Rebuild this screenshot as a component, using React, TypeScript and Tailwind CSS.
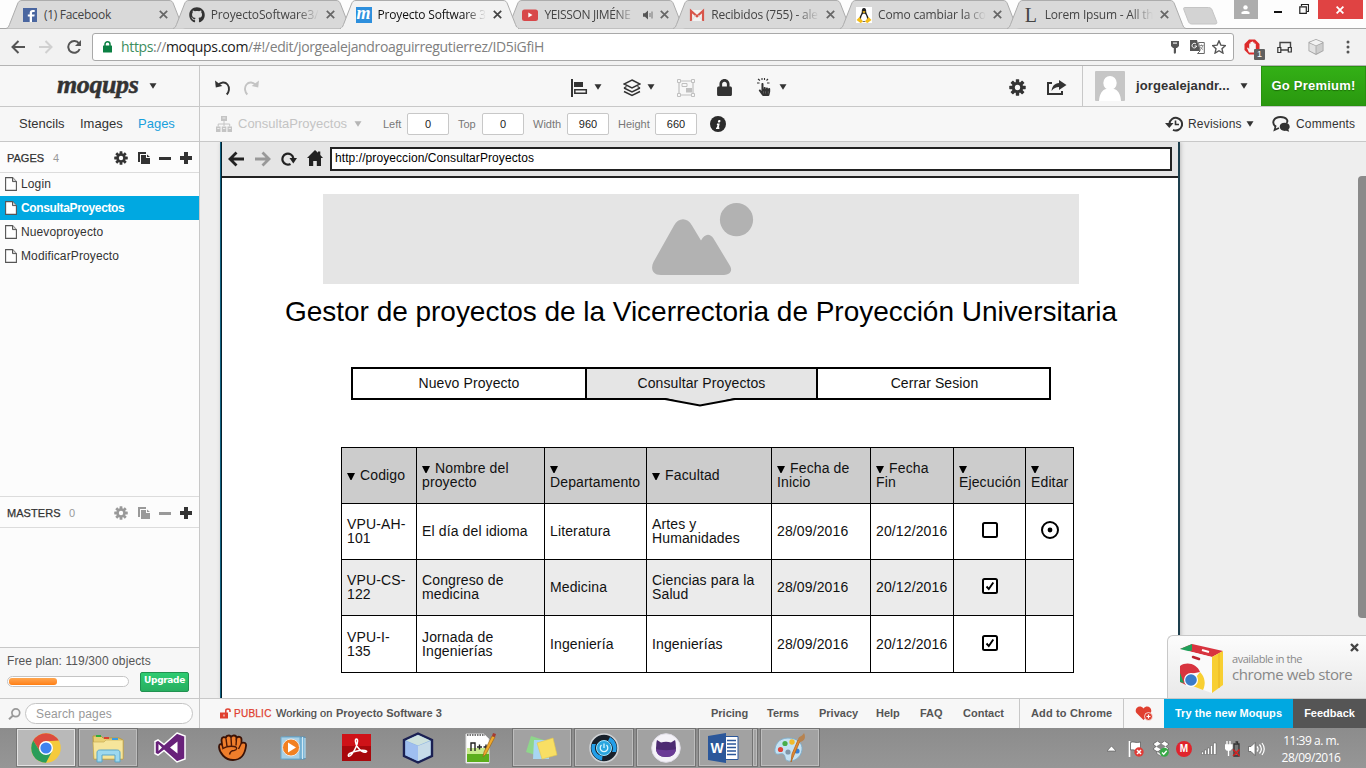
import React from "react";
import { FaGithub, FaLock, FaHandPointer, FaInfo } from "react-icons/fa";

const ui = "font-['Liberation_Sans',Arial,sans-serif]";
const segoe = "font-['Open_Sans','Noto_Sans',sans-serif]";

function Caret({ className = "" }: { className?: string }) {
  return (
    <svg className={"shrink-0 " + className} width="8" height="6" viewBox="0 0 8 6">
      <path d="M0.5 0.3h7L4 5.8z" fill="currentColor" />
    </svg>
  );
}

function Gear({ size, hole, className = "" }: { size: number; hole: string; className?: string }) {
  return (
    <svg className={"shrink-0 " + className} width={size} height={size} viewBox="-9 -9 18 18">
      {[0, 45, 90, 135].map((a) => (
        <rect key={a} x="-1.8" y="-8.7" width="3.6" height="17.4" rx="0.5" fill="currentColor" transform={`rotate(${a})`} />
      ))}
      <circle r="6" fill="currentColor" />
      <circle r="2.8" fill={hole} />
    </svg>
  );
}

/* ---------- Browser tab strip ---------- */

function TabIcon({ kind }: { kind: string }) {
  if (kind === "facebook")
    return (
      <svg width="16" height="16" viewBox="0 0 16 16">
        <rect x="1" y="1" width="14" height="14" fill="#4a66a0" />
        <path d="M10 15V9.600h2.300l.4-2.200H10V6.200c0-.8.4-1.200 1.200-1.200h1.500V3h-2C8.600 3 7.700 4.200 7.700 6v1.400H5.800v2.200h1.900V15z" fill="#fff" />
      </svg>
    );
  if (kind === "github") return <FaGithub size={16} color="#333" />;
  if (kind === "moqups")
    return (
      <span className="flex h-4 w-4 items-center justify-center bg-[#2d8fdd] pb-1 font-['Liberation_Serif',serif] text-[18px] leading-[16px] font-bold text-white italic">m</span>
    );
  if (kind === "youtube")
    return (
      <svg width="16" height="16" viewBox="0 0 16 16">
        <rect x="0" y="2.500" width="16" height="11.500" rx="2.500" fill="#d8484a" />
        <path d="M6.300 5.500v5l4.200-2.500z" fill="#fff" />
      </svg>
    );
  if (kind === "gmail")
    return (
      <svg width="16" height="16" viewBox="0 0 16 16">
        <rect x="1" y="3" width="14" height="11" fill="#f2f2f2" />
        <path d="M2 14V4l6 5.300L14 4v10" fill="none" stroke="#d8554a" strokeWidth="2.200" />
        <path d="M3 13.500L6.500 8M13 13.500L9.500 8" stroke="#ddd" strokeWidth="0.800" />
      </svg>
    );
  if (kind === "linux")
    return (
      <svg width="16" height="16" viewBox="0 0 16 16">
        <rect width="16" height="16" fill="#fff" />
        <path d="M8 1C6 1 5.700 2.800 5.800 5 5.700 7 3 9.500 3.200 12.500L8 15l4.800-2.500C13 9.500 10.300 7 10.200 5 10.300 2.800 10 1 8 1z" fill="#222" />
        <path d="M8 6.500c-1.500 0-3 3-3 5.500 0 1.500 1.500 2.200 3 2.200s3-.7 3-2.200c0-2.500-1.500-5.500-3-5.500z" fill="#fff" />
        <path d="M6.300 4.800L8 4l1.700.8L8 6.200zM0.500 13l3-3L7 14.800 4.500 16zM15.500 13l-3-3L9 14.800l2.500 1.200z" fill="#f5bd18" />
      </svg>
    );
  return <span className="flex h-4 w-4 items-center justify-center font-['Liberation_Serif',serif] text-[20px] leading-4 text-[#444]">L</span>;
}

const tabs = [
  { kind: "facebook", title: "(1) Facebook", cls: "tracking-[-0.3px]", fade: false },
  { kind: "github", title: "ProyectoSoftware3/", cls: "tracking-[-0.15px]", fade: true },
  { kind: "moqups", title: "Proyecto Software 3", cls: "tracking-[-0.2px]", active: true, fade: true },
  { kind: "youtube", title: "YEISSON JIMÉNE", cls: "tracking-[-0.35px]", audio: true, fade: true },
  { kind: "gmail", title: "Recibidos (755) - ale", cls: "tracking-[-0.2px]", fade: true },
  { kind: "linux", title: "Como cambiar la co", cls: "tracking-[-0.15px]", fade: true },
  { kind: "lorem", title: "Lorem Ipsum - All th", cls: "tracking-[-0.2px]", fade: true },
];

function TabStrip() {
  return (
    <div className="flex h-[29px] shrink-0 border-b border-[#a6a6a6] bg-[#fdfdfd] pl-[6px]">
      {tabs.map((t) => (
        <div key={t.kind} className={"relative h-[29px] w-[166.8px] shrink-0 " + (t.active ? "z-10" : "")}>
          <svg className="absolute top-0 left-0" width="179" height="29" viewBox="0 0 179 29">
            <path
              d="M0 28.500C2 28 2.500 27 3.500 24.500L11.500 4C12.500 1.500 13.500.5 16 .5H163c2.500 0 3.500 1 4.500 3.500l8 20.500c1 2.500 1.500 3.500 3.500 4"
              fill={t.active ? "#f2f2f2" : "#d9d9d9"}
              stroke="#acacac"
            />
            {t.active && <path d="M1 28.500h177" stroke="#f2f2f2" strokeWidth="1.500" />}
          </svg>
          <div className="relative flex h-[29px] items-center pl-4">
            <TabIcon kind={t.kind} />
            <div
              className={
                "ml-[6px] shrink-0 text-[12px] leading-[18px] whitespace-nowrap " +
                (t.audio ? "w-[90px] " : "w-[108px] ") +
                (t.fade ? "[mask-image:linear-gradient(to_right,#000_80%,transparent)] " : "") +
                (t.active ? "text-[#111] " : "text-[#444] ") +
                segoe + " " + t.cls
              }
            >
              {t.title}
            </div>
            {t.audio && (
              <svg className="ml-[9px]" width="10" height="10" viewBox="0 0 10 10">
                <path d="M0 3.200h2L5 .5v9L2 6.800H0z" fill="#555" />
                <path d="M7 3v4M9 1.500v7" stroke="#777" />
              </svg>
            )}
            <svg className="ml-[7px]" width="9" height="9" viewBox="0 0 9 9">
              <path d="M.8.8l7.400 7.400M8.200.8L.8 8.200" stroke={t.active ? "#444" : "#666"} strokeWidth="1.700" />
            </svg>
          </div>
        </div>
      ))}
      <svg className="mt-[7px] ml-[9px] shrink-0" width="35" height="18" viewBox="0 0 35 18">
        <path d="M1.500.5h24c2 0 3 1 3.600 2.500l4.500 11.500c.6 2-.1 2.500-1.600 2.500H9c-2 0-3-1-3.600-2.500L1 3C.5 1.500.5.500 1.500.5z" fill="#d3d3d3" stroke="#c4c4c4" />
      </svg>
      <div className="ml-[16px] flex h-[19px] w-6 shrink-0 items-center justify-center bg-[#adadad]">
        <svg width="9" height="9" viewBox="0 0 9 9">
          <circle cx="4.500" cy="2.400" r="2.200" fill="#fff" />
          <path d="M.5 9V7.500C.5 5.500 8.500 5.500 8.500 7.500V9z" fill="#fff" />
        </svg>
      </div>
      <div className="mt-[11px] ml-[16px] h-[2px] w-[8px] shrink-0 bg-[#111]" />
      <svg className="mt-[4px] ml-[17px] shrink-0" width="10" height="10" viewBox="0 0 10 10">
        <path d="M2.500 2V.5h7v7H8M.8 2.800h6.500v6.500H.8z" fill="none" stroke="#222" strokeWidth="1.200" />
      </svg>
      <div className="ml-[9px] flex h-[19px] w-[45px] shrink-0 items-center justify-center bg-[#e04343]">
        <svg width="8" height="8" viewBox="0 0 8 8">
          <path d="M.6.6l6.800 6.800M7.400.6L.6 7.400" stroke="#fff" strokeWidth="1.800" />
        </svg>
      </div>
    </div>
  );
}

function AddressBar() {
  return (
    <div className="flex h-[37px] shrink-0 items-center border-b border-[#b4b4b4] bg-[#f2f2f2]">
      <svg className="ml-[11px] shrink-0" width="14" height="14" viewBox="0 0 14 14">
        <path d="M14 7H2M7.500 1L1.500 7l6 6" fill="none" stroke="#555" strokeWidth="2" />
      </svg>
      <svg className="ml-[14px] shrink-0" width="14" height="14" viewBox="0 0 14 14">
        <path d="M0 7h12M6.500 1l6 6-6 6" fill="none" stroke="#d0d0d0" strokeWidth="2" />
      </svg>
      <svg className="ml-[14px] shrink-0" width="15" height="14" viewBox="0 0 15 14">
        <path d="M12 3.500A5.900 5.900 0 1 0 12.700 9" fill="none" stroke="#555" strokeWidth="2" />
        <path d="M14 0v6H8z" fill="#555" />
      </svg>
      <div className="ml-[10px] flex h-[28px] w-[1142px] shrink-0 items-center rounded-[3px] border border-[#a9a9a9] bg-white">
        <svg className="ml-[10px] shrink-0" width="9" height="12" viewBox="0 0 9 12">
          <path d="M2 6V3.300a2.500 2.500 0 0 1 5 0V6" fill="none" stroke="#0b8043" strokeWidth="1.500" />
          <rect y="4.500" width="9" height="7" rx="0.500" fill="#0b8043" />
        </svg>
        <div className={"ml-[9px] w-[1050px] shrink-0 text-[14px] leading-[20px] tracking-[-0.35px] whitespace-nowrap text-[#808080] " + segoe}>
          <span className="text-[#3c8d5d]">https</span>://<span className="text-[#1a1a1a]">moqups.com</span>/#!/edit/jorgealejandroaguirregutierrez/ID5iGfiH
        </div>
        <svg className="shrink-0" width="8" height="13" viewBox="0 0 8 13">
          <path d="M0 0h8v5L6 7H5v4.500L4 13l-1.200-1V7H2L0 5z" fill="#555" />
          <rect x="2" y="1.500" width="4" height="1.200" fill="#eee" />
        </svg>
        <svg className="ml-[11px] shrink-0" width="15" height="14" viewBox="0 0 15 14">
          <path d="M0 0h7l3 11H0z" fill="#555" />
          <path d="M8.500 2.500h5.800v11H7.500l2.500-2.500z" fill="#fff" stroke="#666" />
          <path d="M6 4a2.300 2.300 0 1 0 .6 2H4.600" fill="none" stroke="#fff" />
          <path d="M9.500 5.500h4M11.500 4.500v1M12.700 6c-.5 1.600-1.300 2.800-2.700 3.600M10 6.500c.6 1.400 1.500 2.300 3 3" fill="none" stroke="#777" strokeWidth="0.800" />
        </svg>
        <svg className="ml-[7px] shrink-0" width="14" height="14" viewBox="0 0 24 24">
          <path d="M12 1.500l3.200 7.300 7.800.8-5.900 5.200 1.700 7.700L12 18.500l-6.800 4 1.700-7.700L1 9.600l7.800-.8z" fill="none" stroke="#555" strokeWidth="2.300" />
        </svg>
      </div>
      <div className="relative ml-[10px] h-[16px] w-[22px] shrink-0">
        <svg width="16" height="16" viewBox="0 0 16 16">
          <path d="M5 .5h6L15.500 5v6L11 15.500H5L.5 11V5z" fill="#dd2b2b" />
          <path d="M5 13.500L3 9l1-.5 1.200 1.500V4.500h1.300V3h1.300V2.500h1.300V3.500h1.400v1.200h1.300V10l-1.500 3.500z" fill="#f5f5f5" />
        </svg>
        <span className={"absolute top-[10px] left-[10px] flex h-[11px] w-[11px] items-center justify-center rounded-[1px] bg-[#606060] text-[9px] leading-[11px] text-white " + ui}>1</span>
      </div>
      <svg className="ml-[11px] shrink-0" width="15" height="13" viewBox="0 0 15 13">
        <path d="M3 7V1.500h10.500V7M4 9h7" fill="none" stroke="#444" strokeWidth="1.400" />
        <path d="M.8 6.500h3v5h-3zM11.300 6.500h3v4.500h-3z" fill="#f2f2f2" stroke="#333" strokeWidth="1.200" />
      </svg>
      <svg className="ml-[16px] shrink-0" width="16" height="16" viewBox="0 0 16 16">
        <path d="M8 0l7.500 3v9L8 16 .5 12V3z" fill="#a2a2a2" />
        <path d="M8 .8L14.500 3.500 8 6.500 1.500 3.500z" fill="#f2f2f2" />
        <path d="M1.300 4.200L7.600 7v7.800l-6.300-3.300z" fill="#e2e2e2" />
        <path d="M14.700 4.200L8.400 7v7.800l6.300-3.300z" fill="#cdcdcd" />
      </svg>
      <svg className="ml-[22px] shrink-0" width="4" height="14" viewBox="0 0 4 14">
        <circle cx="2" cy="2" r="1.500" fill="#555" /><circle cx="2" cy="7" r="1.500" fill="#555" /><circle cx="2" cy="12" r="1.500" fill="#555" />
      </svg>
    </div>
  );
}

/* ---------- Editor header ---------- */

function EditorToolbar() {
  return (
    <div className="flex h-[41px] shrink-0 border-b border-[#c8c8c8] bg-[#f7f7f7] text-[#333]">
      <div className="flex w-[200px] shrink-0 items-center border-r border-[#c8c8c8]">
        <span className="ml-[57px] w-[92px] shrink-0 pb-[3px] font-['Liberation_Serif',serif] text-[26px] leading-[28px] font-bold tracking-[-0.4px] italic [-webkit-text-stroke:0.5px_#333]">moqups</span>
        <Caret />
      </div>
      <svg className="mt-[14px] ml-[15px] shrink-0" width="17" height="16" viewBox="0 0 17 16">
        <path d="M2.500 5.500C6 2 10 1.500 12.500 4.500c2.600 3.200 1.500 7.500-.8 10" fill="none" stroke="#333" strokeWidth="1.900" />
        <path d="M0 .5l.8 7 6.500-1.500z" fill="#333" />
      </svg>
      <svg className="mt-[14px] ml-[10px] shrink-0" width="17" height="16" viewBox="0 0 17 16">
        <path d="M14.500 5.500C11 2 7 1.500 4.500 4.500c-2.600 3.200-1.500 7.500.8 10" fill="none" stroke="#c4c4c4" strokeWidth="1.900" />
        <path d="M17 .5l-.8 7-6.500-1.500z" fill="#c4c4c4" />
      </svg>
      <svg className="mt-[13px] ml-[312px] shrink-0" width="17" height="18" viewBox="0 0 17 18">
        <path d="M0 0h2v18H0zM3 3h9v5H3z" fill="#333" />
        <path d="M3.800 10.800h11.500v3.500H3.800z" fill="none" stroke="#333" strokeWidth="1.500" />
      </svg>
      <Caret className="mt-[18px] ml-[6px]" />
      <svg className="mt-[13px] ml-[21px] shrink-0" width="18" height="18" viewBox="0 0 18 18">
        <path d="M9 1l8 4-8 4-8-4zM1 9l8 4 8-4M1 12.500l8 4 8-4M3.500 7.500L1 9M14.500 7.500L17 9" fill="none" stroke="#333" strokeWidth="1.400" />
      </svg>
      <Caret className="mt-[18px] ml-[6px]" />
      <svg className="mt-[13px] ml-[22px] shrink-0" width="18" height="18" viewBox="0 0 18 18">
        <path d="M2 2h14v14H2z" fill="none" stroke="#c0c0c0" strokeWidth="1.200" />
        <path d="M.5.5h3v3h-3zM14.500.5h3v3h-3zM.5 14.500h3v3h-3zM14.500 14.500h3v3h-3zM5 4.500h5v3H5z" fill="#f7f7f7" stroke="#c0c0c0" />
        <path d="M9 9h6v4.500H9z" fill="#c0c0c0" />
      </svg>
      <FaLock className="mt-[13px] ml-[21px] shrink-0" size={17} />
      <svg className="mt-[12px] ml-[24px] shrink-0" width="15" height="8" viewBox="0 0 15 8">
        <path d="M1 1l2 1.500M0 5h2.500M5 0v2M7.500 0v2M11 1L9.500 2.500M12.500 5H10" stroke="#333" strokeWidth="1.100" />
      </svg>
      <FaHandPointer className="mt-[17px] -ml-[14px] shrink-0" size={13} />
      <Caret className="mt-[18px] ml-[8px]" />
      <Gear size={17} hole="#f7f7f7" className="mt-[13px] ml-[222px]" />
      <svg className="mt-[14px] ml-[21px] shrink-0" width="20" height="15" viewBox="0 0 20 15">
        <path d="M5 3H1v11h14v-3" fill="none" stroke="#333" strokeWidth="2" />
        <path d="M12 0l7.500 5L12 10V7C9 7 7 8 4.500 11 5 6 7.500 3.500 12 3z" fill="#333" />
      </svg>
      <div className="ml-[15px] flex w-[179px] shrink-0 items-center border-l border-[#c8c8c8]">
        <svg className="ml-[12px] shrink-0" width="30" height="30" viewBox="0 0 30 30">
          <rect width="30" height="30" rx="1" fill="#c6c6c6" />
          <ellipse cx="15" cy="12" rx="6.700" ry="7" fill="#fff" />
          <path d="M4 30c.5-7 3-11 7-12h8c4 1 6.500 5 7 12z" fill="#fff" />
        </svg>
        <span className={"ml-[11px] w-[104px] shrink-0 text-[13px] leading-5 font-bold tracking-[0.12px] whitespace-nowrap " + ui}>jorgealejandr...</span>
        <Caret />
      </div>
      <div className={"flex h-10 flex-1 items-center justify-center border border-[#28920f] bg-linear-to-b from-[#33b016] to-[#2a980f] text-[13px] font-bold tracking-[0.22px] whitespace-nowrap text-white [text-shadow:0_1px_1px_#1c6b08] " + ui}>Go Premium!</div>
    </div>
  );
}

function NumField({ value }: { value: string }) {
  return <div className="flex h-[22px] w-[42px] shrink-0 items-center justify-center rounded-[2px] border border-[#c8c8c8] bg-white text-[11px] text-[#222]">{value}</div>;
}

function PropertyBar() {
  return (
    <div className={"flex h-[35px] shrink-0 border-b border-[#c8c8c8] bg-[#f7f7f7] text-[13px] text-[#333] " + ui}>
      <div className="flex w-[200px] shrink-0 items-center border-r border-[#c8c8c8]">
        <span className="ml-[19px] w-[61px]">Stencils</span>
        <span className="w-[58px]">Images</span>
        <span className="text-[#189fdc]">Pages</span>
      </div>
      <div className="flex flex-1 items-center">
        <svg className="ml-[16px] shrink-0" width="16" height="16" viewBox="0 0 16 16">
          <path d="M5 0h6v5H5zM0 10.500h4.500V16H0zM5.800 10.500h4.500V16H5.800zM11.500 10.500H16V16h-4.500z" fill="#c4c4c4" />
          <path d="M8 5v5M2.200 10.500V8h11.500v2.500" fill="none" stroke="#c4c4c4" />
          <path d="M6.500 2h3M1.300 12.500H3.500M7 12.500h2.300M12.700 12.500h2.200" stroke="#f7f7f7" strokeWidth="0.800" />
        </svg>
        <span className="ml-[6px] w-[116px] shrink-0 text-[#c4c4c4]">ConsultaProyectos</span>
        <Caret className="text-[#b5b5b5]" />
        <span className="ml-[21px] w-6 shrink-0 text-[11px] text-[#777]">Left</span>
        <NumField value="0" />
        <span className="ml-[9px] w-6 shrink-0 text-[11px] text-[#777]">Top</span>
        <NumField value="0" />
        <span className="ml-[9px] w-[34px] shrink-0 text-[11px] text-[#777]">Width</span>
        <NumField value="960" />
        <span className="ml-[9px] w-[37px] shrink-0 text-[11px] text-[#777]">Height</span>
        <NumField value="660" />
        <span className="ml-[13px] flex h-4 w-4 shrink-0 items-center justify-center rounded-full bg-[#2b2b2b] text-white">
          <FaInfo size={9} className="-skew-x-12" />
        </span>
        <svg className="ml-[439px] shrink-0" width="18" height="16" viewBox="0 0 18 16">
          <path d="M4.500 7.500a6.300 6.300 0 1 1 3.500 6.300" fill="none" stroke="#333" strokeWidth="2" />
          <path d="M0 7h8.500L4.300 12z" fill="#333" />
          <path d="M10.500 4.500v4h3.500" fill="none" stroke="#333" strokeWidth="1.600" />
        </svg>
        <span className="ml-[5px] w-[58px] shrink-0 text-[12px] tracking-[0.2px]">Revisions</span>
        <Caret />
        <svg className="ml-[18px] shrink-0" width="18" height="16" viewBox="0 0 18 16">
          <path d="M3.500 10.500C-1 6.500 2 1 8.500 1s8 4 6 6" fill="none" stroke="#333" strokeWidth="1.900" />
          <path d="M3.800 9.500L2.500 14 7 12" fill="none" stroke="#333" strokeWidth="1.600" />
          <path d="M12.500 6.800c3 0 5.200 1.600 5.200 4 0 1.200-.5 2-1.300 2.600l.8 2.300-3-.9c-4 .5-6.500-1.400-6.500-4 0-2.400 2-4 4.800-4z" fill="#333" />
        </svg>
        <span className="ml-[6px] text-[12px] tracking-[0.15px]">Comments</span>
      </div>
    </div>
  );
}

/* ---------- Sidebar ---------- */

function ListHeader({ title, count, muted, titleClass, countClass }: { title: string; count: string; muted?: boolean; titleClass: string; countClass: string }) {
  const tone = muted ? "text-[#999]" : "text-[#333]";
  return (
    <div className="flex h-[31px] shrink-0 items-center border-b border-[#dcdcdc] pt-[2px] pl-[7px] text-[#333]">
      <span className={"shrink-0 text-[11px] leading-none [-webkit-text-stroke:0.25px_#333] " + titleClass}>{title}</span>
      <span className={"shrink-0 text-[11px] leading-none text-[#999] " + countClass}>{count}</span>
      <Gear size={14} hole="#fcfcfc" className={tone} />
      <svg className={"ml-[10px] shrink-0 " + tone} width="12" height="12" viewBox="0 0 12 12">
        <path d="M0 0h8v2H2v8H0z" fill="currentColor" />
        <path d="M3 3h5v3h4v6H3zM9 2.500L12 5H9z" fill="currentColor" />
      </svg>
      <span className={"ml-[9px] h-[3px] w-3 shrink-0 " + (muted ? "bg-[#999]" : "bg-[#333]")} />
      <svg className="ml-[9px] shrink-0" width="12" height="12" viewBox="0 0 12 12">
        <path d="M6 0v12M0 6h12" stroke="#333" strokeWidth="4" />
      </svg>
    </div>
  );
}

const pages = [
  { name: "Login" },
  { name: "ConsultaProyectos", active: true },
  { name: "Nuevoproyecto" },
  { name: "ModificarProyecto" },
];

function Sidebar() {
  return (
    <div className={"flex w-[200px] shrink-0 flex-col border-r border-[#c8c8c8] bg-[#fcfcfc] " + ui}>
      <ListHeader title="PAGES" count="4" titleClass="w-[46px]" countClass="w-[61px]" />
      <div className="-mt-px flex h-[324px] shrink-0 flex-col">
        {pages.map((p) => (
          <div key={p.name} className={"flex h-6 shrink-0 items-center pl-[5px] text-[12px] " + (p.active ? "bg-[#00a8e1] font-bold tracking-[-0.35px] text-white" : "tracking-[0.12px] text-[#333]")}>
            <svg className="shrink-0" width="12" height="14" viewBox="0 0 12 14">
              <path d="M.6.6h7l3.800 4v8.800H.6z" fill="#fff" stroke="#555" strokeWidth="1.100" />
              <path d="M7.500.6v4h4" fill="#ccc" stroke="#555" />
            </svg>
            <span className="ml-1">{p.name}</span>
          </div>
        ))}
      </div>
      <div className="flex h-[151px] shrink-0 flex-col border-t border-[#dcdcdc]">
        <ListHeader title="MASTERS" count="0" muted titleClass="w-[62px] tracking-[0.05px]" countClass="w-[45px]" />
      </div>
      <div className="flex h-[51px] shrink-0 flex-col border-t border-[#c8c8c8] bg-[#f7f7f7] pl-[7px]">
        <span className="mt-[6px] text-[12px] leading-[14px] tracking-[0.1px] text-[#555]">Free plan: 119/300 objects</span>
        <div className="flex items-start">
          <div className="mt-[8px] h-[11px] w-[122px] rounded-full border border-[#c4c4c4] bg-white p-px">
            <div className="h-[7px] w-[48px] rounded-[3px] bg-linear-to-b from-[#ffa64d] to-[#ff7f10]" />
          </div>
          <div className="mt-[4px] ml-[11px] flex h-5 w-[49px] items-center justify-center rounded-[2px] border border-[#219150] bg-linear-to-b from-[#2ecc71] to-[#27ae60] pb-[2px] font-['DejaVu_Sans',sans-serif] text-[9px] font-bold tracking-[-0.35px] text-white">Upgrade</div>
        </div>
      </div>
      <div className="flex h-[30px] shrink-0 items-center border-t border-[#c8c8c8] bg-[#f7f7f7]">
        <svg className="ml-[8px] shrink-0" width="13" height="12" viewBox="0 0 13 12">
          <circle cx="7.800" cy="4.800" r="3.900" fill="none" stroke="#999" strokeWidth="1.700" />
          <path d="M5 7.500L1 11.200" stroke="#999" strokeWidth="2" />
        </svg>
        <div className="ml-[4px] flex h-[21px] w-[168px] shrink-0 items-center rounded-full border border-[#c4c4c4] bg-white pl-[10px] text-[12px] tracking-[0.15px] text-[#999]">Search pages</div>
      </div>
    </div>
  );
}

/* ---------- Mockup canvas ---------- */

const head = ["Codigo", "Nombre del proyecto", "Departamento", "Facultad", "Fecha de Inicio", "Fecha Fin", "Ejecución", "Editar"];
const rows = [
  ["VPU-AH-101", "El día del idioma", "Literatura", "Artes y Humanidades", "28/09/2016", "20/12/2016", "box", "radio"],
  ["VPU-CS-122", "Congreso de medicina", "Medicina", "Ciencias para la Salud", "28/09/2016", "20/12/2016", "check", ""],
  ["VPU-I-135", "Jornada de Ingenierías", "Ingeniería", "Ingenierías", "28/09/2016", "20/12/2016", "check", ""],
];

function CellContent({ value }: { value: string }) {
  if (value === "box" || value === "check")
    return (
      <svg className="mx-auto mb-[2px]" width="16" height="16" viewBox="0 0 16 16">
        <rect x="1" y="1" width="14" height="14" rx="1.500" fill="#fff" stroke="#000" strokeWidth="2" />
        {value === "check" && <path d="M4.500 8.500l2.300 2.500 4.500-6.500" fill="none" stroke="#000" strokeWidth="1.900" />}
      </svg>
    );
  if (value === "radio")
    return (
      <svg className="mx-auto mb-[2px]" width="18" height="18" viewBox="0 0 18 18">
        <circle cx="9" cy="9" r="8" fill="#fff" stroke="#000" strokeWidth="2" />
        <circle cx="9" cy="9" r="2.400" fill="#000" />
      </svg>
    );
  return <span className="w-full">{value}</span>;
}

function ProjectTable() {
  return (
    <div className="mt-[47px] ml-[119px] grid w-[733px] grid-cols-[74px_127px_101px_124px_98px_82px_71px_47px] grid-rows-[55px_55px_55px_56px] gap-px bg-black p-px text-[14px] leading-[14px] tracking-[0.13px] text-[#111]">
      {head.map((h) => (
        <div key={h} className="flex items-center bg-[#ccc] pr-[4px] pb-px pl-[5px]">
          <span className="w-full">
            <svg className="mr-px inline-block align-baseline" width="8" height="8" viewBox="0 0 8 8"><path d="M0 1h8L4.500 8h-1z" fill="#000" /></svg>{" "}{h}
          </span>
        </div>
      ))}
      {rows.map((r, i) =>
        r.map((c, j) => (
          <div key={i + "-" + j} className={"flex items-center " + (j < 5 ? "pr-[5px] pl-[5px] " : j === 5 ? "pl-[5px] " : "") + (i < 2 ? "pb-px " : "") + (i === 1 ? "bg-[#ebebeb]" : "bg-white")}>
            <CellContent value={c} />
          </div>
        ))
      )}
    </div>
  );
}

function Canvas() {
  return (
    <div className={"relative flex flex-1 overflow-hidden bg-[#eee] " + ui}>
      <div className="ml-5 flex w-[960px] shrink-0 flex-col overflow-hidden border-r-2 border-l-2 border-l-[#0e5f80] border-r-[#1d3f4d] bg-white shadow-[1px_0_4px_#bbb] [border-left-style:ridge]">
        <div className="flex h-[36px] shrink-0 items-start border-b-2 border-[#222] bg-[#e5e5e5]">
          <svg className="mt-[9px] ml-[6px] shrink-0" width="16" height="16" viewBox="0 0 16 16">
            <path d="M16 8H2.500M8.500 1.500L2 8l6.500 6.500" fill="none" stroke="#222" strokeWidth="2.800" />
          </svg>
          <svg className="mt-[9px] ml-[11px] shrink-0" width="16" height="16" viewBox="0 0 16 16">
            <path d="M0 8h13.500M7.500 1.500L14 8l-6.500 6.500" fill="none" stroke="#999" strokeWidth="2.800" />
          </svg>
          <svg className="mt-[10px] ml-[10px] shrink-0" width="16" height="14" viewBox="0 0 16 14">
            <path d="M9.500 12A5.500 5.500 0 1 1 12.300 6" fill="none" stroke="#222" strokeWidth="2.200" />
            <path d="M8.500 6H16l-3.700 5.500z" fill="#222" />
          </svg>
          <svg className="mt-[8px] ml-[10px] shrink-0" width="16" height="16" viewBox="0 0 16 16">
            <path d="M8 0l3 2.800V1.500h2.300v3.500L16 8h-2v8H9.800v-5H6.200v5H2V8H0z" fill="#222" />
          </svg>
          <div className="mt-[5px] ml-[7px] h-6 w-[842px] shrink-0 border-2 border-[#222] bg-white pl-[3px] text-[12px] leading-[19px] tracking-[0.08px] whitespace-nowrap text-black">http://proyeccion/ConsultarProyectos</div>
        </div>
        <div className="mt-[16px] ml-[101px] h-[90px] w-[756px] shrink-0 bg-[#e5e5e5]">
          <svg className="ml-[329px]" width="102" height="90" viewBox="0 0 102 90">
            <circle cx="84.500" cy="25.700" r="16.600" fill="#b2b2b2" />
            <path d="M9 81C0 81-1.500 74 1.500 68L22 31.500c4.500-8.500 13.500-8.500 18 0l9 15c3.500-6.500 8.500-8 12.500-2L77.500 71c4 6 0 10-5.500 10z" fill="#b2b2b2" />
          </svg>
        </div>
        <div className="mt-[10px] w-[958px] shrink-0 text-center text-[28px] leading-[36px] tracking-[-0.025px] whitespace-nowrap text-black">Gestor de proyectos de la Vicerrectoria de Proyección Universitaria</div>
        <div className="relative mt-[37px] ml-[129px] flex h-[33px] w-[700px] shrink-0 border-2 border-black text-[14px] tracking-[0.1px] text-[#111]">
          <div className="flex w-[232px] items-center justify-center">Nuevo Proyecto</div>
          <div className="flex w-[233px] items-center justify-center border-r-2 border-l-2 border-black bg-[#e5e5e5]">Consultar Proyectos</div>
          <div className="flex flex-1 items-center justify-center pl-[2px]">Cerrar Sesion</div>
          <svg className="absolute top-[29px] left-[311px]" width="72" height="9" viewBox="0 0 72 9">
            <path d="M1 0L36 7.500 71 0z" fill="#e5e5e5" />
            <path d="M0 1h1l35 6.500L71 1h1" fill="none" stroke="#000" strokeWidth="1.800" />
          </svg>
        </div>
        <ProjectTable />
      </div>
      <div className="absolute top-[34px] right-0 h-[442px] w-[8px] rounded-l-[4px] bg-[#8a8a8a]" />
      <div className="absolute right-0 bottom-0 flex h-[63px] w-[199px] rounded-tl-[6px] border-t border-l border-[#c8c8c8] bg-linear-to-b from-[#fcfcfc] to-[#e9e9e9]">
        <svg className="mt-[7px] ml-[11px] shrink-0" width="45" height="51" viewBox="0 0 45 51">
          <path d="M13 1l31 7-11 6L1 6z" fill="#d8343f" />
          <path d="M13 1L1 6v4l12-2.500z" fill="#1fa05a" />
          <path d="M1 6l32 8v36L1 39z" fill="#fafafa" />
          <path d="M33 14l11-6v34l-11 8z" fill="#f8cf32" />
          <path d="M40 10v35" stroke="#e8b420" />
          <path d="M14 14l6 2" stroke="#b9222e" strokeWidth="2.500" strokeLinecap="round" />
          <path d="M23 7l7 2" stroke="#fff" strokeWidth="2" />
          <path d="M1 23C8 18 18 21 21 29L11 31 7 42 1 39z" fill="#d8343f" />
          <path d="M21 29c5 5 6 12 3 18L11 42z" fill="#f8cf32" />
          <circle cx="12" cy="37" r="7" fill="#fff" />
          <circle cx="12" cy="37" r="5.800" fill="#3a7cc9" />
          <path d="M1 39V30l4 10z" fill="#1fa05a" />
        </svg>
        <div className={"ml-[8px] text-[#888] " + segoe}>
          <div className="mt-[15px] text-[11px] leading-[16px] tracking-[-0.45px] whitespace-nowrap">available in the</div>
          <div className="-mt-px text-[15px] leading-[16px] tracking-[-0.42px] whitespace-nowrap">chrome web store</div>
        </div>
        <svg className="absolute top-[7px] right-[7px]" width="9" height="9" viewBox="0 0 9 9">
          <path d="M1 1l7 7M8 1L1 8" stroke="#444" strokeWidth="2.400" />
        </svg>
      </div>
    </div>
  );
}

function StatusBar() {
  return (
    <div className={"flex h-[30px] shrink-0 items-center border-t border-[#c8c8c8] bg-[#f7f7f7] text-[11px] font-bold whitespace-nowrap text-[#555] " + ui}>
      <svg className="ml-[20px] shrink-0" width="11" height="11" viewBox="0 0 11 11">
        <path d="M5.800 5V2.500c0-2 4.200-2 4.200 0V4" fill="none" stroke="#e04030" strokeWidth="1.500" />
        <rect y="4.500" width="8" height="6" fill="#e04030" />
        <path d="M4 6.500v2" stroke="#fff" />
      </svg>
      <span className="ml-[3px] w-[42px] shrink-0 text-[10px] font-normal tracking-[0.25px] text-[#e04030] [-webkit-text-stroke:0.25px_#e04030]">PUBLIC</span>
      <span className="w-[60px] shrink-0 font-normal tracking-[0.1px] text-[#444] [-webkit-text-stroke:0.2px_#444]">Working on</span>
      <span className="w-[375px] shrink-0">Proyecto Software 3</span>
      <span className="w-[56px] shrink-0">Pricing</span>
      <span className="w-[52px] shrink-0">Terms</span>
      <span className="w-[57px] shrink-0">Privacy</span>
      <span className="w-[44px] shrink-0">Help</span>
      <span className="w-[43px] shrink-0">FAQ</span>
      <span className="w-[56px] shrink-0">Contact</span>
      <span className="flex h-full w-[104px] shrink-0 items-center border-l border-[#c8c8c8] pl-[11px] tracking-[0.15px]">Add to Chrome</span>
      <span className="flex h-full w-[41px] shrink-0 items-center justify-center border-l border-[#c8c8c8]">
        <svg width="18" height="15" viewBox="0 0 18 15">
          <path d="M8.500 14L1.500 7C-1.500 3 4.500-2.500 8.500 2.500 12.500-2.500 18.500 3 15.500 7z" fill="#e04030" />
          <circle cx="13.500" cy="10.500" r="4" fill="#e04030" stroke="#f7f7f7" strokeWidth="0.800" />
          <path d="M13.500 8.500v4M11.500 10.500h4" stroke="#fff" strokeWidth="1.200" />
        </svg>
      </span>
      <span className="flex h-full w-[129px] shrink-0 items-center justify-center bg-[#00a8e1] tracking-[0.08px] text-white">Try the new Moqups</span>
      <span className="flex h-full flex-1 items-center justify-center bg-[#555] text-white">Feedback</span>
    </div>
  );
}

/* ---------- Taskbar ---------- */

function AppIcon({ kind }: { kind: string }) {
  switch (kind) {
    case "chrome":
      return (
        <svg width="30" height="30" viewBox="-15 -15 30 30">
          <circle r="14.800" fill="#f5ca3c" />
          <path d="M-12.800-7.400A14.800 14.800 0 0 1 12.800-7.400L0-6.800-5.900 3.400z" fill="#dc4b3e" />
          <path d="M-12.800-7.400A14.800 14.800 0 0 0 0 14.800L5.900 3.400-5.900 3.400z" fill="#2a9d5a" />
          <circle r="7" fill="#fff" /><circle r="5.600" fill="#3f83f0" />
        </svg>
      );
    case "files":
      return (
        <svg width="32" height="30" viewBox="0 0 32 30">
          <path d="M1 3h8l2 2h16l4 2v19H2z" fill="#e8cf72" stroke="#b99a3b" />
          <path d="M1 9h11l2-2h17v19H2z" fill="#f6e59b" stroke="#c9ad55" strokeWidth="0.700" />
          <path d="M4 3h5" stroke="#2fae3c" strokeWidth="2" /><path d="M12 5h5" stroke="#d84030" strokeWidth="2" /><path d="M20 6h6" stroke="#3c9be0" strokeWidth="2" />
          <path d="M5 29v-9c0-3 2-3 4-3h15c2 0 4 0 4 3v9h-5v-7H10v7z" fill="#9cd8ef" stroke="#5aa5c7" />
        </svg>
      );
    case "vs":
      return (
        <svg width="32" height="31" viewBox="0 0 32 31">
          <path d="M23 1l8 3v23l-8 3L10 18.500 4 23l-3-1.500V9.500L4 8l6 4.500z" fill="#68217a" stroke="#fff" strokeWidth="1.500" />
          <path d="M23.500 9.500v12L16 15.500zM4.500 12v7L8 15.500z" fill="#fff" />
        </svg>
      );
    case "hand":
      return (
        <svg width="29" height="27" viewBox="0 0 29 27">
          <path d="M1 13c0-3 2-3.500 3-2.500L3.500 6C3.500 3 7 2 8 4.500 7.500 1 12.500.5 13 3.500 14 .5 18.500 1 18.500 4c1.500-2 5-1.500 5 1.500v3.500c3-1 5 0 4.500 3C27 20 23 26 15 26S1.500 19 1 13z" fill="#ef7d2b" stroke="#3a1206" strokeWidth="1.800" />
          <path d="M8 4.500l1 8M13 3.500l.5 8M18.500 4.500l-.5 7M4 10.500l1 4c3-2 7-2.500 11-2 4 .5 3 3.500 0 4-3 0-4 2-4.500 4M23.500 9l-3 6" fill="none" stroke="#4e1806" strokeWidth="1.400" />
        </svg>
      );
    case "media":
      return (
        <svg width="28" height="26" viewBox="0 0 28 26">
          <path d="M5 2h20v22H5z" fill="#7db7d8" stroke="#5693b8" /><path d="M1 2h19v22H1z" fill="#a8d0e6" stroke="#6aa7ca" />
          <path d="M22.500 2v22M25 3v20" stroke="#d0e8f4" />
          <circle cx="11" cy="12.500" r="8.500" fill="#f28021" stroke="#e9e9e9" /><path d="M8 7.500v10l8-5z" fill="#fff" />
        </svg>
      );
    case "pdf":
      return (
        <svg width="29" height="27" viewBox="0 0 29 27">
          <rect width="29" height="27" fill="#a8080c" /><rect width="29" height="12" fill="#cf1218" />
          <path d="M14.500 5c-2 0-1 5 1 8s6 6 8.500 5-2-2.500-9-1-9.500 3.500-8.500 5S12 18 14 13s2-8 .500-8z" fill="none" stroke="#fff" strokeWidth="1.500" />
        </svg>
      );
    case "cube":
      return (
        <svg width="32" height="32" viewBox="0 0 32 32">
          <path d="M16 1.500L30 8v16l-14 6.500L2 24V8z" fill="#8fb5e3" stroke="#1b2052" strokeWidth="2.400" />
          <path d="M16 3l12 5.500-12 5-12-5z" fill="#cfe2dd" /><path d="M3.500 9L16 14v15L3.500 23z" fill="#9fbef0" /><path d="M28.500 9L16 14v15l12.500-6z" fill="#c7dbe8" />
        </svg>
      );
    case "npp":
      return (
        <svg width="31" height="32" viewBox="0 0 31 32">
          <path d="M1 2h18l5 5v24H1z" fill="#fff" stroke="#ddd" /><path d="M2 20h22v10H2z" fill="#5cae1c" /><path d="M2 16h22v6H2z" fill="#c8ea8c" />
          <path d="M2 3h18" stroke="#777" strokeWidth="2" strokeDasharray="1.500 1" />
          <path d="M6 19v-8h4v8M12 15h5M14.500 12.500v5M18.500 15h5M21 12.500v5" fill="none" stroke="#222" strokeWidth="1.400" />
          <path d="M18 25l1-5L27 4l3 1-9 17z" fill="#f0a92c" stroke="#9c671b" strokeWidth="0.700" /><path d="M27 4l1-3 3 1-1 3z" fill="#a63b32" />
        </svg>
      );
    case "notes":
      return (
        <svg width="32" height="26" viewBox="0 0 32 26">
          <path d="M5 1l16 5-5 16L0 17z" fill="#8ed68a" /><path d="M8 5h15v19H7z" fill="#a8d6f2" /><path d="M11 8l16-5 4 17-15 4z" fill="#f8df64" stroke="#e3c64b" strokeWidth="0.600" />
        </svg>
      );
    case "power":
      return (
        <svg width="30" height="30" viewBox="-15 -15 30 30">
          <circle r="14" fill="#17202b" stroke="#d0d3d6" strokeWidth="1.600" />
          <path d="M-12-4A12.600 12.600 0 0 0-2 12.400L-1.500 8A8 8 0 0 1-8-4zM12 4A12.600 12.600 0 0 0 6-11L4-7A8 8 0 0 1 8 4z" fill="#229ee8" />
          <circle r="7.500" fill="#2aa6df" stroke="#9fe3ff" />
          <path d="M0-4.500V0M-2.500-3A3.800 3.800 0 1 0 2.500-3" fill="none" stroke="#d9f6ff" strokeWidth="1.300" />
        </svg>
      );
    case "kraken":
      return (
        <svg width="30" height="30" viewBox="0 0 30 30">
          <circle cx="15" cy="15" r="14.300" fill="#f4f2f8" stroke="#dedbe5" />
          <path d="M6 7l4 2.500c3-1 7-1 10 0L24 7c1 3 .5 5 1 8 0 6-4 9-10 9S5 21 5 15c.5-3 0-5 1-8z" fill="#4c2a72" />
          <path d="M5 16c3 1.500 17 1.500 20 0-.5 5-4 8-10 8S5.500 21 5 16z" fill="#6a3a96" />
        </svg>
      );
    case "word":
      return (
        <div className="relative h-[30px] w-[31px]">
          <svg width="31" height="30" viewBox="0 0 31 30">
            <path d="M17 3.500h13v23H17z" fill="#fff" stroke="#2b579a" />
            <path d="M19 7.500h9M19 11h9M19 14.500h9M19 18h9M19 21.500h9" stroke="#2b579a" strokeWidth="1.400" />
            <path d="M0 3L18 0v30L0 27z" fill="#2b579a" />
          </svg>
          <span className={"absolute top-[7px] left-[2px] w-[14px] text-center text-[14px] leading-[16px] font-bold text-white " + ui}>W</span>
        </div>
      );
    default:
      return (
        <svg width="32" height="30" viewBox="0 0 32 30">
          <path d="M14 5c9 0 15 5 14 12-1 8-9 12-14 11-4-1-2-6-5-7s-7 2-8-2C0 12 5 5 14 5z" fill="#c4e2f3" stroke="#82aec9" />
          <circle cx="6.500" cy="16.500" r="2.600" fill="#e0453a" /><circle cx="11" cy="10.500" r="2.600" fill="#48ad4c" /><circle cx="18" cy="9" r="2.700" fill="#f0bb2b" /><circle cx="14" cy="19" r="2.600" fill="#8096a8" /><circle cx="23" cy="18" r="2.600" fill="#397fd0" />
          <path d="M26 8l-9 21 1-8 6-14z" fill="#e28b32" stroke="#b5651c" strokeWidth="0.800" /><path d="M24 7c0-4 4-3 6-7 2 4 1 8-4 9z" fill="#b78350" />
        </svg>
      );
  }
}

const apps = ["chrome", "files", "vs", "hand", "media", "pdf", "cube", "npp", "notes", "power", "kraken", "word", "paint"];
const openApps = ["files", "notes", "power", "kraken", "word", "paint"];

function Taskbar() {
  return (
    <div className="flex h-10 shrink-0 bg-linear-to-b from-[#8c8c8c] to-[#969696] pl-4">
      <div className="flex gap-[2px]">
        {apps.map((a) => (
          <div
            key={a}
            className={
              "relative flex h-[39px] w-[60px] shrink-0 items-center justify-center " +
              (a === "chrome" ? "border-2 border-[#e2e2e2] bg-[#b9b9b9] outline -outline-offset-1 outline-[#777]" : openApps.includes(a) ? "border border-[#737373] bg-[#a2a2a2] shadow-[inset_0_0_0_1px_#bdbdbd]" : "")
            }
          >
            <div className={a === "word" ? "mr-[9px]" : ""}><AppIcon kind={a} /></div>
            {a === "word" && <span className="absolute top-0 right-[3px] h-full border-r border-l border-r-[#bdbdbd] border-l-[#737373]" />}
          </div>
        ))}
      </div>
      <svg className="mt-[18px] ml-[287px] shrink-0" width="9" height="6" viewBox="0 0 9 6"><path d="M4.500 0L9 5H0z" fill="#fff" stroke="#555" strokeWidth="0.600" /></svg>
      <svg className="mt-[13px] ml-[12px] shrink-0" width="16" height="16" viewBox="0 0 16 16">
        <path d="M1.500 0v16" stroke="#fff" strokeWidth="1.600" /><path d="M2.500 1.500c3-1.500 5 1 10-.5V9c-5 1.500-7-1-10 0z" fill="#fff" stroke="#555" strokeWidth="0.700" />
        <circle cx="11" cy="11" r="4.700" fill="#e03b36" /><path d="M9 9l4 4M13 9l-4 4" stroke="#fff" strokeWidth="1.500" />
      </svg>
      <svg className="mt-[13px] ml-[9px] shrink-0" width="16" height="16" viewBox="0 0 16 16">
        <path d="M4.500 0L8 2.500 11.500 0 16 3l-3 2.500L16 8l-4.500 3L8 8.500 4.500 11 0 8l3-2.500L0 3z" fill="#fff" stroke="#555" strokeWidth="0.700" /><path d="M4 10l4 3 3-3v3l-3 2-4-2z" fill="#eee" stroke="#555" strokeWidth="0.500" />
        <path d="M3 5.500L8 2.500l5 3-5 3z" fill="#888" />
        <circle cx="11.300" cy="11.300" r="4.500" fill="#38a947" /><path d="M9 11.500l1.700 1.700 3-3.500" fill="none" stroke="#fff" strokeWidth="1.400" />
      </svg>
      <div className={"mt-[13px] ml-[7px] flex h-[16px] w-[16px] shrink-0 items-center justify-center rounded-full bg-[#e0242c] text-[10px] leading-none font-bold text-white " + ui}>M</div>
      <svg className="mt-[14px] ml-[9px] shrink-0" width="16" height="14" viewBox="0 0 16 13">
        <path d="M.5 9.500h2V12h-2zM3.500 7.500h2V12h-2zM6.500 5.500h2V12h-2zM9.500 3h2v9h-2zM12.500.5h2.500V12h-2.500z" fill="#fff" stroke="#555" strokeWidth="0.500" />
      </svg>
      <svg className="mt-[13px] ml-[8px] shrink-0" width="16" height="16" viewBox="0 0 16 16">
        <path d="M2 0v4M5 0v4M0 4h7v3l-2 2H2L0 7zM3.500 9v6" fill="#fff" stroke="#fff" strokeWidth="1.300" />
        <path d="M9 3h5v12H9zM10.500 1h2v2" fill="#777" stroke="#333" strokeWidth="1.300" /><path d="M8 8.500l6.500 6.500M14.500 8.500L8 15" stroke="#d32020" strokeWidth="1.600" />
      </svg>
      <svg className="mt-[14px] ml-[7px] shrink-0" width="17" height="14" viewBox="0 0 17 14">
        <path d="M.5 4.500h2.500L7 .5v13L3 9.500H.5z" fill="#fff" stroke="#555" strokeWidth="0.700" /><path d="M9 4.500c1.300 1.500 1.300 3.500 0 5M11.500 2.500c2.500 3 2.500 6 0 9M14 1c3 4 3 8 0 12" fill="none" stroke="#fff" strokeWidth="1.200" />
      </svg>
      <div className={"ml-[9px] w-[74px] shrink-0 pt-[4px] text-center text-[12px] leading-[17px] tracking-[-0.48px] whitespace-nowrap text-white " + segoe}>
        <div>11:39 a. m.</div>
        <div>28/09/2016</div>
      </div>
    </div>
  );
}

export default function App() {
  return (
    <div className="flex h-[768px] w-[1366px] flex-col overflow-hidden bg-white">
      <TabStrip />
      <AddressBar />
      <EditorToolbar />
      <PropertyBar />
      <div className="flex h-[586px] shrink-0">
        <Sidebar />
        <div className="flex min-w-0 flex-1 flex-col">
          <Canvas />
          <StatusBar />
        </div>
      </div>
      <Taskbar />
    </div>
  );
}
